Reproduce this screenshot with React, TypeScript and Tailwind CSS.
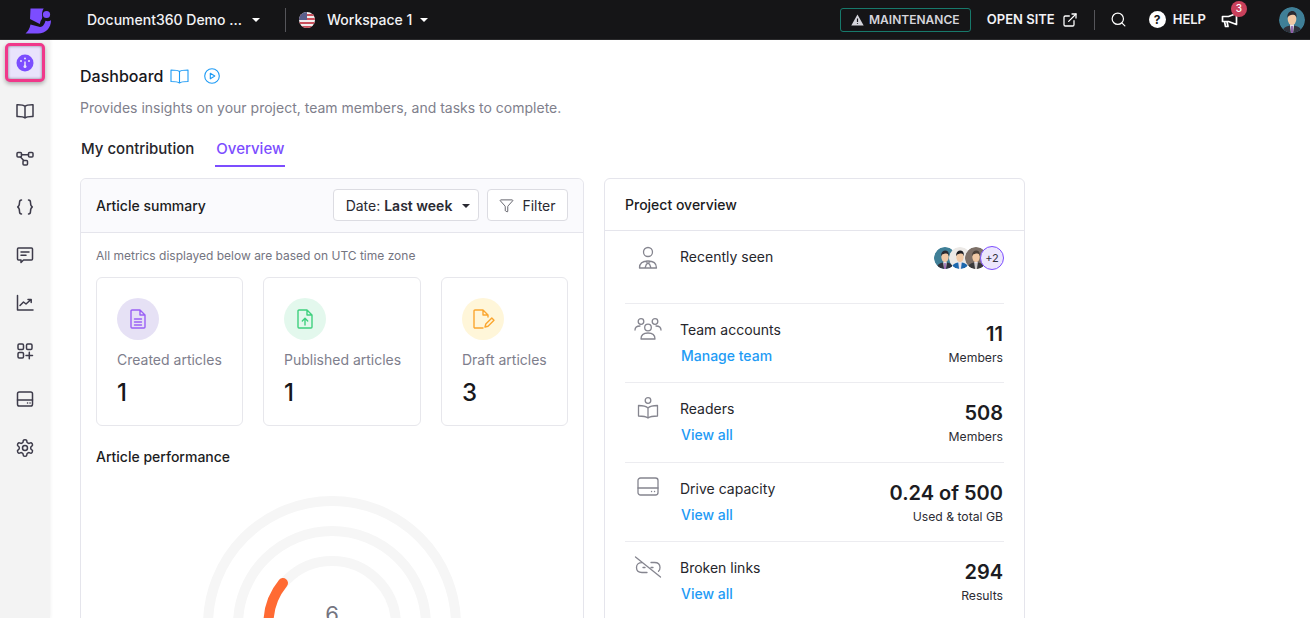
import { ExternalLink, Search, Funnel } from "lucide-react";

const Caret = ({ className = "border-t-white" }: { className?: string }) => (
  <span className={`inline-block w-0 h-0 border-x-[4px] border-x-transparent border-t-[4px] ${className}`} />
);

function Logo() {
  return (
    <svg width="30" height="30" viewBox="0 0 30 30" fill="#7c4dff">
      <path d="M7.500 3.500h13.200c-1.500 2.400-2 5-1.500 7.700.3 2-.7 3.600-1.600 4.900L16.800 19 7 14z" />
      <path d="M7.500 19.500L17 22c2.500.2 4.500-2.500 5.500-6.200 1.800.6 3.800.4 5.500-.6 0 7.300-5 13.300-13 13.300H2.500c2.500-2 4.300-5 5-9z" />
      <circle cx="23.500" cy="9.500" r="3.600" />
    </svg>
  );
}

function Flag() {
  return (
    <svg width="16" height="16" viewBox="0 0 16 16">
      <defs>
        <clipPath id="flagclip">
          <circle cx="8" cy="8" r="8" />
        </clipPath>
      </defs>
      <g clipPath="url(#flagclip)">
        <rect width="16" height="16" fill="#f1eeee" />
        <rect y="2" width="16" height="2" fill="#c8505c" />
        <rect y="6" width="16" height="2" fill="#c8505c" />
        <rect y="10" width="16" height="2" fill="#c8505c" />
        <rect y="14" width="16" height="2" fill="#c8505c" />
        <rect width="8" height="8" fill="#5a5f8c" />
      </g>
    </svg>
  );
}

function Avatar({ size, bg, hair, suit, tie = "#8d5aa8", id }: { size: number; bg: string; hair: string; suit: string; tie?: string; id: string }) {
  return (
    <svg width={size} height={size} viewBox="0 0 24 24" className="rounded-full shrink-0">
      <defs>
        <clipPath id={id}>
          <circle cx="12" cy="12" r="12" />
        </clipPath>
      </defs>
      <g clipPath={`url(#${id})`}>
        <rect width="24" height="24" fill={bg} />
        <path d="M3 24c0-5 4-7 9-7s9 2 9 7z" fill={suit} />
        <path d="M10 16h4l-1 8h-2z" fill="#e8e4ee" />
        <path d="M11.300 17.500h1.400l.3 6.500h-2z" fill={tie} />
        <ellipse cx="12" cy="11" rx="4" ry="5.500" fill="#f1c9a5" />
        <path d="M7.800 10c-.5-4 2-6.200 4.400-6.200 2.600 0 4.500 2 4 6.200-.5-2-1.500-2.800-2.800-2.800-1.600 0-4.800.3-5.600 2.800z" fill={hair} />
      </g>
    </svg>
  );
}

const sideStroke = {
  fill: "none",
  stroke: "#3d3b4a",
  strokeWidth: 1.500,
  strokeLinecap: "round" as const,
  strokeLinejoin: "round" as const,
};

const sideIcons = [
  <svg key="book" width="20" height="20" viewBox="0 0 20 20" {...sideStroke}>
    <path d="M10 5.500C8.500 4 6 3.700 2 3.800v11.700c4-.1 6.500.1 8 1.500 1.500-1.400 4-1.600 8-1.500V3.800c-4-.1-6.500.2-8 1.700zM10 5.500V17" />
  </svg>,
  <svg key="nodes" width="20" height="20" viewBox="0 0 20 20" {...sideStroke}>
    <rect x="2" y="3.500" width="4.500" height="4.500" rx="1" />
    <rect x="13.500" y="3.500" width="4.500" height="4.500" rx="1" />
    <rect x="8" y="11.500" width="4.500" height="4.500" rx="1" />
    <path d="M6.500 5.700h7M5.500 8l3.200 3.500" />
  </svg>,
  <svg key="braces" width="20" height="20" viewBox="0 0 20 20" {...sideStroke}>
    <path d="M6.500 3c-2 0-2 1-2 2.500s0 3.500-1.800 4.500c1.800 1 1.800 3 1.800 4.500s0 2.500 2 2.500M13.500 3c2 0 2 1 2 2.500s0 3.500 1.800 4.500c-1.800 1-1.800 3-1.800 4.500s0 2.500-2 2.500" />
  </svg>,
  <svg key="chat" width="20" height="20" viewBox="0 0 20 20" {...sideStroke}>
    <path d="M3.500 3h13a1 1 0 0 1 1 1v10a1 1 0 0 1-1 1h-8l-2.500 2.500V15H3.500a1 1 0 0 1-1-1V4a1 1 0 0 1 1-1z" />
    <path d="M6 7h8M6 10.300h5" />
  </svg>,
  <svg key="chart" width="20" height="20" viewBox="0 0 20 20" {...sideStroke}>
    <path d="M2.500 2.500v14.500h15.500M5 12.500l3.500-3.500 2.500 2 5-4.500M13 6.500h3.200v3" />
  </svg>,
  <svg key="apps" width="20" height="20" viewBox="0 0 20 20" {...sideStroke}>
    <rect x="3" y="3" width="5.500" height="5.500" rx="1.200" />
    <rect x="11.500" y="3" width="5.500" height="5.500" rx="1.200" />
    <rect x="3" y="11.500" width="5.500" height="5.500" rx="1.200" />
    <path d="M14.300 11.300v6.500M11 14.500h6.500" />
  </svg>,
  <svg key="drive" width="20" height="20" viewBox="0 0 20 20" {...sideStroke}>
    <rect x="2.500" y="3" width="15" height="14" rx="1.800" />
    <path d="M2.500 11h15M12.500 14h.1M15 14h.1" />
  </svg>,
  <svg key="gear" width="20" height="20" viewBox="0 0 24 24" {...sideStroke} strokeWidth={1.800} className="translate-y-px">
    <path d="M12.220 2h-.44a2 2 0 0 0-2 2v.18a2 2 0 0 1-1 1.730l-.43.250a2 2 0 0 1-2 0l-.15-.08a2 2 0 0 0-2.730.73l-.22.380a2 2 0 0 0 .73 2.730l.15.100a2 2 0 0 1 1 1.720v.510a2 2 0 0 1-1 1.740l-.15.090a2 2 0 0 0-.73 2.730l.22.380a2 2 0 0 0 2.730.730l.15-.08a2 2 0 0 1 2 0l.43.250a2 2 0 0 1 1 1.730V20a2 2 0 0 0 2 2h.44a2 2 0 0 0 2-2v-.18a2 2 0 0 1 1-1.730l.43-.250a2 2 0 0 1 2 0l.15.080a2 2 0 0 0 2.730-.730l.22-.390a2 2 0 0 0-.73-2.730l-.15-.080a2 2 0 0 1-1-1.740v-.500a2 2 0 0 1 1-1.740l.15-.090a2 2 0 0 0 .73-2.730l-.22-.380a2 2 0 0 0-2.730-.730l-.15.080a2 2 0 0 1-2 0l-.43-.250a2 2 0 0 1-1-1.730V4a2 2 0 0 0-2-2z" />
    <circle cx="12" cy="12" r="3" />
  </svg>,
];

function TopBar() {
  return (
    <header className="h-10 shrink-0 bg-[#151517] flex items-center text-white border-b border-[#2a2a2c]">
      <div className="w-[87px] pl-[23px] shrink-0">
        <Logo />
      </div>
      <span className="text-sm font-medium text-[#f2f2f5] w-[165px]">Document360 Demo ...</span>
      <Caret />
      <div className="w-px h-6 bg-[#55555a] ml-[25px] mr-[13px]" />
      <Flag />
      <span className="text-sm font-medium text-[#f2f2f5] ml-[12px] mr-[8px]">Workspace 1</span>
      <Caret />
      <div className="ml-auto flex items-center pr-[5px]">
        <div className="h-6 w-[131px] border border-[#17796b] rounded-[3px] flex items-center justify-center gap-[5px] text-xs font-semibold text-[#d5d5dc]">
          <svg width="13" height="12" viewBox="0 0 13 12">
            <path d="M6.500.5l6.200 11H.3z" fill="#d5d5dc" />
            <path d="M6.500 4.500v3.500M6.500 9.200v.8" stroke="#151517" strokeWidth="1.200" />
          </svg>
          MAINTENANCE
        </div>
        <span className="ml-4 text-[13px] font-semibold text-[#f2f2f5]">OPEN SITE</span>
        <ExternalLink className="ml-[7px] w-[16px] h-[16px] text-white" strokeWidth={1.900} />
        <div className="w-px h-5 bg-[#55555a] ml-[16px] mr-[15px]" />
        <Search className="w-[17px] h-[17px] text-white" strokeWidth={1.700} />
        <span className="ml-[22px] w-[17px] h-[17px] rounded-full bg-white text-[#151517] text-xs font-bold flex items-center justify-center">
          ?
        </span>
        <span className="ml-[7px] text-[13px] font-semibold text-[#f2f2f5]">HELP</span>
        <div className="relative ml-[15px]">
          <svg width="18" height="16" viewBox="0 0 18 16" fill="none" stroke="#fff" strokeWidth="1.700" strokeLinejoin="round">
            <path d="M1.500 4.500h6L15.500 1.500v11L7.500 9.500h-6z" />
            <path d="M3.500 9.500l1 5h2.500l-1-5" />
          </svg>
          <span className="absolute -top-[11px] left-[10px] w-4 h-4 rounded-full bg-[#c9415c] text-white text-[10px] font-medium flex items-center justify-center">
            3
          </span>
        </div>
        <div className="ml-[40px]">
          <Avatar size={26} bg="#3f7f97" hair="#2a2a30" suit="#30323c" id="av-top" />
        </div>
      </div>
    </header>
  );
}

function Sidebar() {
  return (
    <aside className="w-[50px] shrink-0 bg-[#f3f3f3] shadow-[1px_0_3px_rgba(0,0,0,0.05)] flex flex-col items-center pt-[3px]">
      <div className="w-[40px] h-[39px] rounded-[5px] border-[3px] border-[#f0388a] bg-[#e9e3fc] shadow-[inset_0_0_3px_rgba(0,0,0,0.45),0_2px_4px_rgba(0,0,0,0.3)] flex items-center justify-center">
        <svg width="18" height="18" viewBox="0 0 18 18">
          <circle cx="9" cy="9" r="8.500" fill="#7c4dff" />
          <circle cx="5" cy="7" r="1" fill="#e9e3fc" />
          <circle cx="13" cy="7" r="1" fill="#e9e3fc" />
          <circle cx="9" cy="4.500" r="1" fill="#e9e3fc" />
          <path d="M9 7.500v5" stroke="#e9e3fc" strokeWidth="1.500" />
          <circle cx="9" cy="12.500" r="1.500" fill="#e9e3fc" />
        </svg>
      </div>
      <div className="flex flex-col items-center gap-7 mt-[19px]">{sideIcons}</div>
    </aside>
  );
}

function MetricCard({
  width,
  circle,
  icon,
  label,
  value,
}: {
  width: string;
  circle: string;
  icon: React.ReactNode;
  label: string;
  value: string;
}) {
  return (
    <div className={`${width} h-[149px] border border-[#e7e7ec] rounded-md pl-5 pt-5`}>
      <div className={`w-[42px] h-[42px] rounded-full flex items-center justify-center ${circle}`}>{icon}</div>
      <div className="text-sm text-[#7e7e8c] mt-[10px] leading-5">{label}</div>
      <div className="text-2xl font-medium text-[#17171c] mt-[7px] leading-8">{value}</div>
    </div>
  );
}

function ArticleSummary() {
  const fileStroke = { fill: "none", strokeWidth: 1.400, strokeLinecap: "round" as const, strokeLinejoin: "round" as const };
  return (
    <section className="w-[504px] shrink-0 h-[500px] border border-[#e5e5ec] rounded-md">
      <div className="h-[54px] bg-[#fafafd] border-b border-[#e5e5ec] rounded-t-md flex items-center pl-[15px] pr-[15px]">
        <h2 className="text-sm font-medium text-[#1c1c22]">Article summary</h2>
        <div className="ml-auto flex items-center gap-2 mb-px">
          <button className="h-8 w-[146px] pl-[4px] pt-px bg-white border border-[#dcdce2] rounded-[4px] flex items-center justify-center gap-[10px] text-sm text-[#2a2a32]">
            <span>
              Date: <span className="font-semibold">Last week</span>
            </span>
            <Caret className="border-t-[#2a2a32]" />
          </button>
          <button className="h-8 w-[81px] pt-px bg-white border border-[#dcdce2] rounded-[4px] flex items-center justify-center gap-[8px] text-sm text-[#2a2a32]">
            <Funnel className="w-[15px] h-[15px] text-[#44444e]" strokeWidth={1.300} />
            Filter
          </button>
        </div>
      </div>
      <div className="px-[15px]">
        <p className="text-xs text-[#74747f] mt-[15px] leading-[16px]">All metrics displayed below are based on UTC time zone</p>
        <div className="flex gap-5 mt-[13px]">
          <MetricCard
            width="w-[147px]"
            circle="bg-[#e6e1f5]"
            label="Created articles"
            value="1"
            icon={
              <svg width="16" height="20" viewBox="0 0 16 20" {...fileStroke} stroke="#9a60f5">
                <path d="M2 1h8l5 5v12a1 1 0 0 1-1 1H2a1 1 0 0 1-1-1V2a1 1 0 0 1 1-1zM10 1v5h5M4.500 10h7M4.500 13h7M4.500 16h7" />
              </svg>
            }
          />
          <MetricCard
            width="w-[158px]"
            circle="bg-[#e3f8ed]"
            label="Published articles"
            value="1"
            icon={
              <svg width="16" height="20" viewBox="0 0 16 20" {...fileStroke} stroke="#3fd07e">
                <path d="M2 1h8l5 5v12a1 1 0 0 1-1 1H2a1 1 0 0 1-1-1V2a1 1 0 0 1 1-1zM10 1v5h5M8 16v-6.500M5.300 12L8 9.300l2.700 2.700" />
              </svg>
            }
          />
          <MetricCard
            width="w-[127px]"
            circle="bg-[#fff6d9]"
            label="Draft articles"
            value="3"
            icon={
              <svg width="23" height="20" viewBox="0 0 23 20" {...fileStroke} stroke="#fba62f">
                <path d="M11 19H3a1 1 0 0 1-1-1V2a1 1 0 0 1 1-1h8l5 5v2M11 1v5h5M13 18l.8-3 6-6 2.200 2.200-6 6z" />
              </svg>
            }
          />
        </div>
        <h3 className="text-sm font-medium text-[#1c1c22] mt-[21px] leading-5">Article performance</h3>
        <div className="relative mt-[24px] flex justify-center">
          <svg width="268" height="268" viewBox="0 0 268 268" fill="none">
            <circle cx="134" cy="134" r="124" stroke="#f6f6f6" strokeWidth="10" />
            <circle cx="134" cy="134" r="94" stroke="#f6f6f6" strokeWidth="10" />
            <circle cx="134" cy="134" r="64" stroke="#f6f6f6" strokeWidth="10" />
            <path d="M70.500 134A64 64 0 0 1 85 92" stroke="#ff6a33" strokeWidth="10" strokeLinecap="round" />
          </svg>
          <span className="absolute left-0 right-0 top-[109px] text-center text-[22px] text-[#74747f] leading-7">6</span>
        </div>
      </div>
    </section>
  );
}

const iconStroke = {
  fill: "none",
  stroke: "#85858f",
  strokeWidth: 1.300,
  strokeLinecap: "round" as const,
  strokeLinejoin: "round" as const,
};

function Row({
  icon,
  label,
  link,
  value,
  unit,
  height,
}: {
  icon: React.ReactNode;
  label: string;
  link: string;
  value: string;
  unit: string;
  height: string;
}) {
  return (
    <div className={`${height} border-t border-[#ececf0] flex`}>
      <div className="w-[55px] shrink-0 pt-[14px] flex justify-center pr-[10px]">{icon}</div>
      <div className="pt-[16px]">
        <div className="text-sm text-[#26262c] leading-5">{label}</div>
        <a className="block text-sm font-medium text-[#1e9bf5] leading-5 mt-[6px] ml-px">{link}</a>
      </div>
      <div className="ml-auto text-right pt-[16px] pr-px">
        <div className="text-[20px] font-semibold text-[#1c1c22] leading-7">{value}</div>
        <div className="text-[12.200px] text-[#2c2c34] leading-4 mt-[2px]">{unit}</div>
      </div>
    </div>
  );
}

function ProjectOverview() {
  return (
    <section className="w-[421px] shrink-0 h-[500px] border border-[#e5e5ec] rounded-md">
      <div className="h-[52px] border-b border-[#e5e5ec] flex items-center pl-5">
        <h2 className="text-sm font-medium text-[#1c1c22]">Project overview</h2>
      </div>
      <div className="px-5">
        <div className="h-[72px] flex">
          <div className="w-[55px] shrink-0 pt-[15px] flex justify-center pr-[10px]">
            <svg width="20" height="23" viewBox="0 0 20 23" {...iconStroke}>
              <circle cx="10" cy="6" r="4.500" />
              <path d="M1.500 22c0-5 3-7 8.500-7s8.500 2 8.500 7zM8 15l2 3 2-3M7 22l1.500-4M13 22l-1.500-4" />
            </svg>
          </div>
          <div className="pt-4 text-sm text-[#26262c] leading-5">Recently seen</div>
          <div className="ml-auto flex items-start pt-4 -space-x-[6.500px]">
            <Avatar size={22} bg="#3f7f97" hair="#2a2a30" suit="#30323c" id="av-a" />
            <Avatar size={22} bg="#ece9e6" hair="#1d1d22" suit="#1d68ae" tie="#e8e4ee" id="av-b" />
            <Avatar size={22} bg="#7d7068" hair="#4a4038" suit="#3a3a3c" tie="#c8c4be" id="av-c" />
            <span className="w-6 h-6 -mt-px rounded-full bg-[#ece6fd] border border-[#7c4dff] text-[11px] text-[#33333b] flex items-center justify-center relative">
              +2
            </span>
          </div>
        </div>
        <Row
          height="h-[79px]"
          label="Team accounts"
          link="Manage team"
          value="11"
          unit="Members"
          icon={
            <svg width="28" height="22" viewBox="0 0 28 22" {...iconStroke}>
              <circle cx="7" cy="3.500" r="2.800" />
              <circle cx="21" cy="3.500" r="2.800" />
              <circle cx="14" cy="9.500" r="3.300" />
              <path d="M1 12c0-2.500 1.500-4 5-4M27 12c0-2.500-1.500-4-5-4M7 21c0-4 2.500-6 7-6s7 2 7 6z" />
            </svg>
          }
        />
        <Row
          height="h-[80px]"
          label="Readers"
          link="View all"
          value="508"
          unit="Members"
          icon={
            <svg width="22" height="22" viewBox="0 0 22 22" {...iconStroke}>
              <circle cx="11" cy="3.500" r="2.800" />
              <path d="M11 11c-2-2-5-2.500-9.500-2.500v10.500c4.500 0 7.500.5 9.500 2 2-1.500 5-2 9.500-2V8.500C16 8.500 13 9 11 11zM11 11v10" />
            </svg>
          }
        />
        <Row
          height="h-[79px]"
          label="Drive capacity"
          link="View all"
          value="0.24 of 500"
          unit="Used & total GB"
          icon={
            <svg width="22" height="19" viewBox="0 0 22 19" {...iconStroke}>
              <rect x="1" y="1" width="20" height="17" rx="2.500" />
              <path d="M1 11h20M14.500 14.500h.1M17.500 14.500h.1" />
            </svg>
          }
        />
        <Row
          height="h-[79px]"
          label="Broken links"
          link="View all"
          value="294"
          unit="Results"
          icon={
            <svg width="28" height="22" viewBox="0 0 28 22" {...iconStroke}>
              <path d="M1.500 1l25 20M8 6.500c-3.500 0-5.500 2-5.500 5s2 5 5.500 5h5M17 6.500h3.500c3.500 0 5.500 2 5.500 5 0 1.500-.5 3-1.500 3.800M9 11.500h2M17 11.500h2" />
            </svg>
          }
        />
      </div>
    </section>
  );
}

export default function App() {
  return (
    <div className="h-[618px] w-full overflow-hidden flex flex-col bg-white font-['Inter',sans-serif]">
      <TopBar />
      <div className="flex flex-1 min-h-0">
        <Sidebar />
        <main className="flex-1 pl-[30px] pt-[25px] min-w-0">
          <div className="flex items-center h-[22px]">
            <h1 className="text-base font-medium text-[#17171c]">Dashboard</h1>
            <svg className="ml-[7px]" width="19" height="15" viewBox="0 0 19 15" fill="none" stroke="#1e9bf5" strokeWidth="1.100" strokeLinejoin="round">
              <path d="M9.500 2.500C8 1.200 5.500 1 1 1v11.500c4.500 0 7 .2 8.500 1.500 1.500-1.300 4-1.500 8.500-1.500V1c-4.500 0-7 .2-8.500 1.500zM9.500 2.500V14" />
            </svg>
            <svg className="ml-[15px]" width="16" height="16" viewBox="0 0 16 16" fill="none" stroke="#1e9bf5" strokeWidth="1.100" strokeLinejoin="round">
              <circle cx="8" cy="8" r="7.300" />
              <path d="M6.300 5.200l4.500 2.800-4.500 2.800z" />
            </svg>
          </div>
          <p className="text-sm text-[#80808c] mt-[11px] leading-5">
            Provides insights on your project, team members, and tasks to complete.
          </p>
          <div className="flex items-start h-[32px] mt-[17px] pl-px gap-[21px]">
            <span className="text-[15px] font-medium text-[#26262c] leading-[28px] h-[32px]">My contribution</span>
            <span className="text-[15px] font-medium text-[#7c4dff] leading-[28px] h-[32px] px-px border-b-2 border-[#7c4dff]">Overview</span>
          </div>
          <div className="flex gap-5 mt-[11px]">
            <ArticleSummary />
            <ProjectOverview />
          </div>
        </main>
      </div>
    </div>
  );
}
